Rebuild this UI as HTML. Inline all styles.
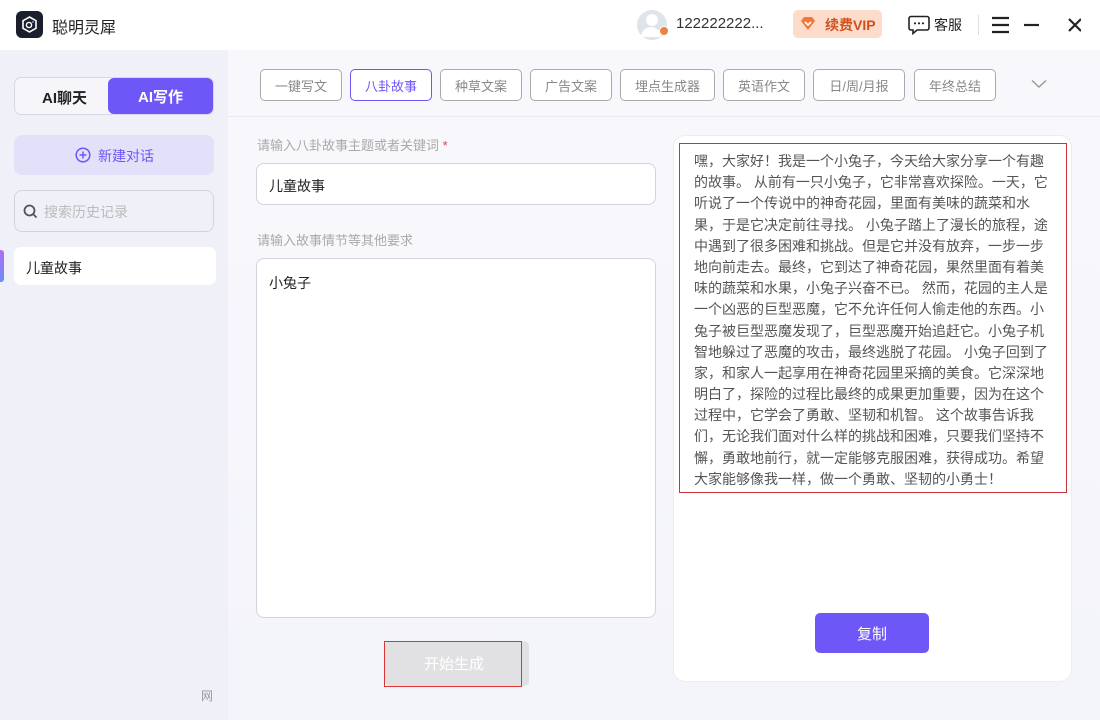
<!DOCTYPE html>
<html><head><meta charset="utf-8"><style>
*{box-sizing:border-box;margin:0;padding:0}
body{width:1100px;height:720px;overflow:hidden;font-family:"Liberation Sans","Noto Sans CJK SC",sans-serif;background:#f7f7fc;position:relative;color:#333}
.abs{position:absolute}
.header{left:0;top:0;width:1100px;height:50px;background:#fff}
.side{left:0;top:50px;width:228px;height:670px;background:#eff0f8}
.main{left:228px;top:50px;width:872px;height:670px;background:linear-gradient(180deg,#f8f8fc,#f4f4fb)}
.tab{position:absolute;top:69px;height:32px;border:1px solid #aaa;border-radius:5px;font-size:13px;color:#888;display:flex;align-items:center;justify-content:center;background:#fff}
.tab.on{border-color:#6e57f7;color:#6e57f7}
.box{background:#fff;border:1px solid #d4d4dc;border-radius:8px}
.story div{height:21.2px;line-height:21.2px;white-space:nowrap}
</style></head><body>
<div class="abs header"></div>
<div class="abs" style="left:16px;top:11px;width:27px;height:27px;background:#1a1f2b;border-radius:6px"></div>
<svg class="abs" style="left:20px;top:15px" width="19" height="19" viewBox="0 0 19 19"><path d="M9.5 2 L16 5.7 V13.3 L9.5 17 L3 13.3 V5.7Z" fill="none" stroke="#fff" stroke-width="1.6"/><circle cx="9" cy="10" r="2.6" fill="none" stroke="#fff" stroke-width="1.4"/><circle cx="13" cy="7" r="1" fill="#6e8bff"/></svg>
<div class="abs" style="left:52px;top:14px;font-size:16px;color:#222">聪明灵犀</div>
<div class="abs" style="left:637px;top:10px;width:30px;height:30px;border-radius:50%;background:#dfe3ea"></div>
<div class="abs" style="left:646px;top:14px;width:12px;height:12px;border-radius:50%;background:#fff"></div>
<div class="abs" style="left:641px;top:27px;width:20px;height:10px;border-radius:10px 10px 0 0;background:#fff"></div>
<div class="abs" style="left:659px;top:26px;width:10px;height:10px;border-radius:50%;background:#f08040;border:1.5px solid #fff"></div>
<div class="abs" style="left:676px;top:15px;font-size:15px;color:#333">122222222...</div>
<div class="abs" style="left:793px;top:10px;width:89px;height:28px;border-radius:5px;background:#fddccb"></div>
<svg class="abs" style="left:800px;top:16px" width="16" height="15" viewBox="0 0 16 15"><path d="M1 5 L4 1 H12 L15 5 L8 14Z" fill="#f0783c"/><path d="M5 6 L8 9 L11 6" stroke="#fff" stroke-width="1.6" fill="none"/></svg>
<div class="abs" style="left:825px;top:15px;font-size:14px;color:#d0501a;font-weight:bold">续费VIP</div>
<svg class="abs" style="left:908px;top:15px" width="22" height="20" viewBox="0 0 22 20"><path d="M3 1.5 H19 a2 2 0 0 1 2 2 V13 a2 2 0 0 1 -2 2 H9 L5 18.5 V15 H3 a2 2 0 0 1 -2 -2 V3.5 a2 2 0 0 1 2 -2Z" fill="none" stroke="#222" stroke-width="1.6"/><circle cx="7" cy="8.3" r="1.1" fill="#222"/><circle cx="11" cy="8.3" r="1.1" fill="#222"/><circle cx="15" cy="8.3" r="1.1" fill="#222"/></svg>
<div class="abs" style="left:934px;top:15px;font-size:14px;color:#222">客服</div>
<div class="abs" style="left:978px;top:15px;width:1px;height:20px;background:#ddd"></div>
<svg class="abs" style="left:991px;top:16px" width="90" height="18" viewBox="0 0 90 18"><path d="M1 2H18M1 9H18M1 16H18" stroke="#222" stroke-width="2.2"/><path d="M33 9H48" stroke="#222" stroke-width="2.2"/><path d="M79 3L91 15M91 3L79 15" stroke="#222" stroke-width="2.2" transform="translate(-1,0)"/></svg>

<div class="abs side"></div>
<div class="abs main"></div>
<div class="abs" style="left:14px;top:77px;width:200px;height:38px;border:1px solid #d8d8e2;border-radius:7px;background:#f6f6fa"></div>
<div class="abs" style="left:42px;top:87px;font-size:15px;font-weight:bold;color:#222">AI聊天</div>
<div class="abs" style="left:108px;top:78px;width:105px;height:36px;border-radius:6px;background:#6e57f7;color:#fff;font-size:15px;font-weight:bold;display:flex;align-items:center;justify-content:center">AI写作</div>
<div class="abs" style="left:14px;top:135px;width:200px;height:40px;border-radius:8px;background:#e3e0fa"></div>
<svg class="abs" style="left:75px;top:147px" width="16" height="16" viewBox="0 0 16 16"><circle cx="8" cy="8" r="6.8" fill="none" stroke="#6e57f7" stroke-width="1.5"/><path d="M8 4.5V11.5M4.5 8H11.5" stroke="#6e57f7" stroke-width="1.5"/></svg>
<div class="abs" style="left:98px;top:146px;font-size:14px;color:#6e57f7">新建对话</div>
<div class="abs" style="left:14px;top:190px;width:200px;height:42px;border:1px solid #d4d4dc;border-radius:8px"></div>
<svg class="abs" style="left:23px;top:204px" width="15" height="15" viewBox="0 0 15 15"><circle cx="6.5" cy="6.5" r="5" fill="none" stroke="#555" stroke-width="1.8"/><path d="M10 10L13.5 13.5" stroke="#555" stroke-width="1.8"/></svg>
<div class="abs" style="left:44px;top:202px;font-size:14px;color:#bbb">搜索历史记录</div>
<div class="abs" style="left:0;top:250px;width:4px;height:32px;border-radius:0 3px 3px 0;background:linear-gradient(#b070f0,#6a8cf8)"></div>
<div class="abs" style="left:14px;top:247px;width:202px;height:38px;border-radius:7px;background:#fff"></div>
<div class="abs" style="left:26px;top:258px;font-size:14px;color:#222">儿童故事</div>
<div class="abs" style="left:201px;top:687px;font-size:12px;color:#999">网</div>

<div class="tab" style="left:260px;width:82px">一键写文</div>
<div class="tab on" style="left:350px;width:82px">八卦故事</div>
<div class="tab" style="left:440px;width:82px">种草文案</div>
<div class="tab" style="left:530px;width:82px">广告文案</div>
<div class="tab" style="left:620px;width:95px">埋点生成器</div>
<div class="tab" style="left:723px;width:82px">英语作文</div>
<div class="tab" style="left:813px;width:92px">日/周/月报</div>
<div class="tab" style="left:914px;width:82px">年终总结</div>
<svg class="abs" style="left:1031px;top:79px" width="16" height="10" viewBox="0 0 16 10"><path d="M1 1.5L8 8L15 1.5" fill="none" stroke="#999" stroke-width="1.4"/></svg>
<div class="abs" style="left:228px;top:116px;width:872px;height:1px;background:#e8e8ef"></div>

<div class="abs" style="left:257px;top:135px;font-size:13px;color:#aaa">请输入八卦故事主题或者关键词 <span style="color:#e04040">*</span></div>
<div class="abs box" style="left:256px;top:163px;width:400px;height:42px"></div>
<div class="abs" style="left:269px;top:176px;font-size:14px;color:#222">儿童故事</div>
<div class="abs" style="left:257px;top:230px;font-size:13px;color:#aaa">请输入故事情节等其他要求</div>
<div class="abs box" style="left:256px;top:258px;width:400px;height:360px"></div>
<div class="abs" style="left:269px;top:273px;font-size:14px;color:#222">小兔子</div>
<div class="abs" style="left:385px;top:641px;width:144px;height:45px;border-radius:5px;background:#e1e1e3;color:#fff;font-size:15px;display:flex;align-items:center;justify-content:center;padding-right:6px">开始生成</div>
<div class="abs" style="left:384px;top:641px;width:138px;height:46px;border:1px solid #d33"></div>

<div class="abs" style="left:673px;top:135px;width:399px;height:547px;background:#fff;border-radius:12px;border:1px solid #ececf2"></div>
<div class="abs" style="left:679px;top:143px;width:388px;height:350px;border:1px solid #c8343a"></div>
<div class="abs story" style="left:694px;top:151px;font-size:14px;color:#555">
<div>嘿，大家好！我是一个小兔子，今天给大家分享一个有趣</div>
<div>的故事。 从前有一只小兔子，它非常喜欢探险。一天，它</div>
<div>听说了一个传说中的神奇花园，里面有美味的蔬菜和水</div>
<div>果，于是它决定前往寻找。 小兔子踏上了漫长的旅程，途</div>
<div>中遇到了很多困难和挑战。但是它并没有放弃，一步一步</div>
<div>地向前走去。最终，它到达了神奇花园，果然里面有着美</div>
<div>味的蔬菜和水果，小兔子兴奋不已。 然而，花园的主人是</div>
<div>一个凶恶的巨型恶魔，它不允许任何人偷走他的东西。小</div>
<div>兔子被巨型恶魔发现了，巨型恶魔开始追赶它。小兔子机</div>
<div>智地躲过了恶魔的攻击，最终逃脱了花园。 小兔子回到了</div>
<div>家，和家人一起享用在神奇花园里采摘的美食。它深深地</div>
<div>明白了，探险的过程比最终的成果更加重要，因为在这个</div>
<div>过程中，它学会了勇敢、坚韧和机智。 这个故事告诉我</div>
<div>们，无论我们面对什么样的挑战和困难，只要我们坚持不</div>
<div>懈，勇敢地前行，就一定能够克服困难，获得成功。希望</div>
<div>大家能够像我一样，做一个勇敢、坚韧的小勇士！</div>
</div>
<div class="abs" style="left:815px;top:613px;width:114px;height:40px;border-radius:5px;background:#6e57f7;color:#fff;font-size:15px;display:flex;align-items:center;justify-content:center">复制</div>
</body></html>
